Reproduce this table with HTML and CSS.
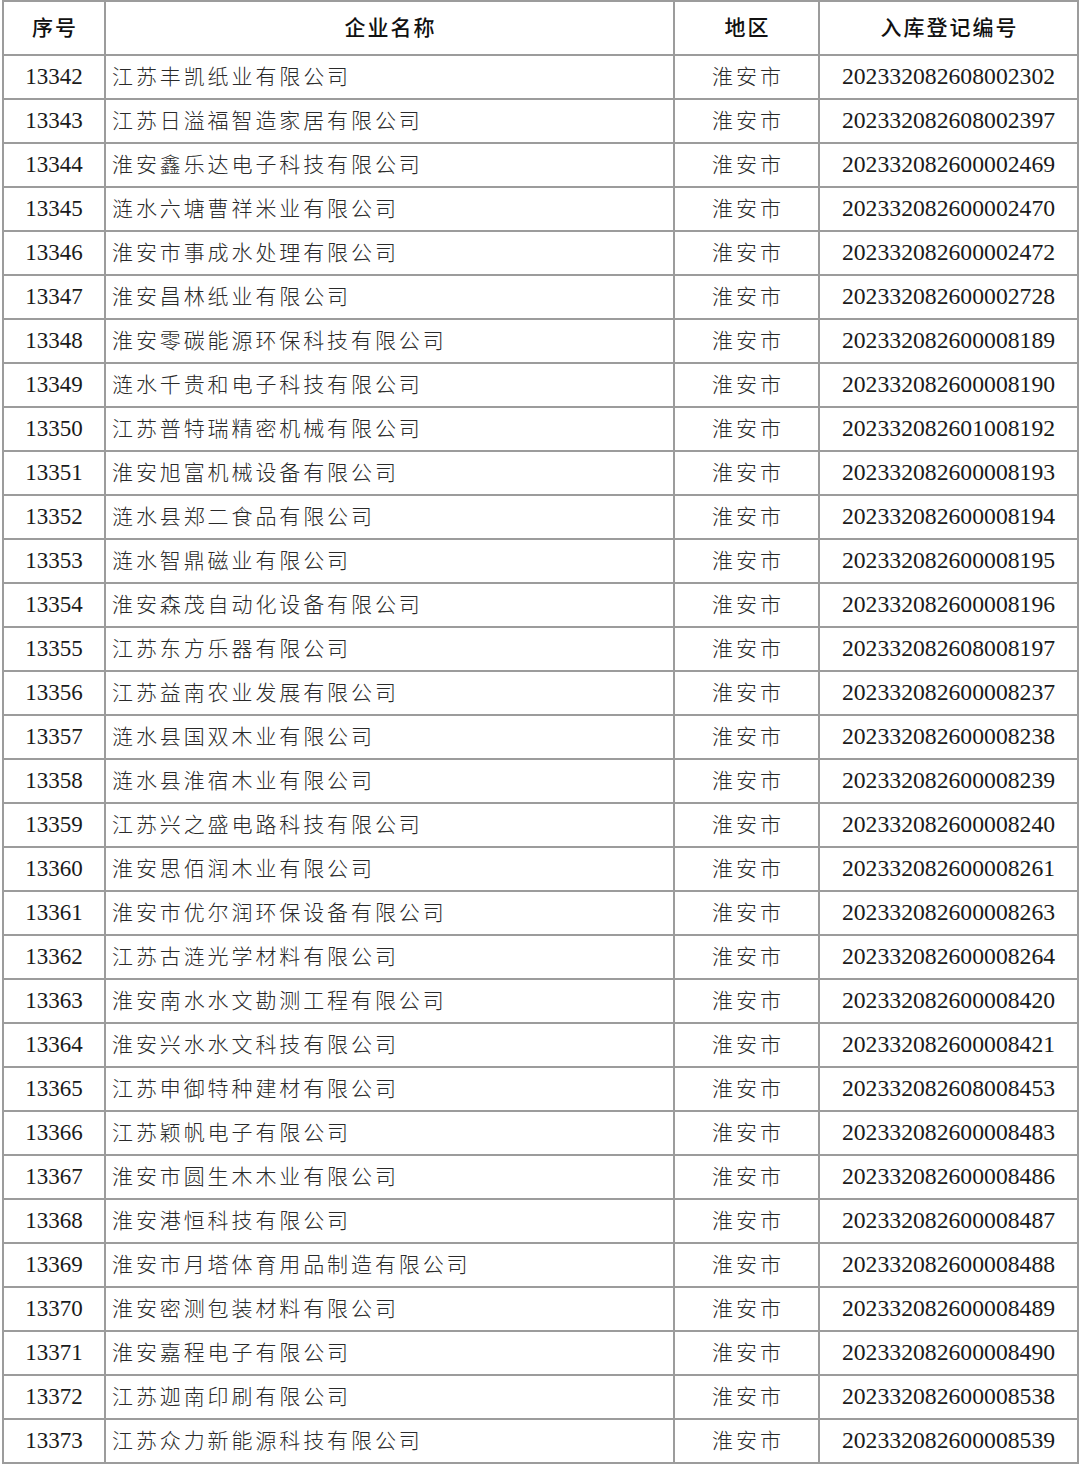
FILE: index.html
```html
<!DOCTYPE html>
<html lang="zh-CN">
<head>
<meta charset="utf-8">
<title>企业名单</title>
<link rel="stylesheet" href="styles.css">
</head>
<body>
<div class="table">
  <div class="cell head">序号</div>
  <div class="cell head">企业名称</div>
  <div class="cell head">地区</div>
  <div class="cell head">入库登记编号</div>

  <div class="cell num">13342</div><div class="cell name">江苏丰凯纸业有限公司</div><div class="cell region">淮安市</div><div class="cell code">202332082608002302</div>
  <div class="cell num">13343</div><div class="cell name">江苏日溢福智造家居有限公司</div><div class="cell region">淮安市</div><div class="cell code">202332082608002397</div>
  <div class="cell num">13344</div><div class="cell name">淮安鑫乐达电子科技有限公司</div><div class="cell region">淮安市</div><div class="cell code">202332082600002469</div>
  <div class="cell num">13345</div><div class="cell name">涟水六塘曹祥米业有限公司</div><div class="cell region">淮安市</div><div class="cell code">202332082600002470</div>
  <div class="cell num">13346</div><div class="cell name">淮安市事成水处理有限公司</div><div class="cell region">淮安市</div><div class="cell code">202332082600002472</div>
  <div class="cell num">13347</div><div class="cell name">淮安昌林纸业有限公司</div><div class="cell region">淮安市</div><div class="cell code">202332082600002728</div>
  <div class="cell num">13348</div><div class="cell name">淮安零碳能源环保科技有限公司</div><div class="cell region">淮安市</div><div class="cell code">202332082600008189</div>
  <div class="cell num">13349</div><div class="cell name">涟水千贵和电子科技有限公司</div><div class="cell region">淮安市</div><div class="cell code">202332082600008190</div>
  <div class="cell num">13350</div><div class="cell name">江苏普特瑞精密机械有限公司</div><div class="cell region">淮安市</div><div class="cell code">202332082601008192</div>
  <div class="cell num">13351</div><div class="cell name">淮安旭富机械设备有限公司</div><div class="cell region">淮安市</div><div class="cell code">202332082600008193</div>
  <div class="cell num">13352</div><div class="cell name">涟水县郑二食品有限公司</div><div class="cell region">淮安市</div><div class="cell code">202332082600008194</div>
  <div class="cell num">13353</div><div class="cell name">涟水智鼎磁业有限公司</div><div class="cell region">淮安市</div><div class="cell code">202332082600008195</div>
  <div class="cell num">13354</div><div class="cell name">淮安森茂自动化设备有限公司</div><div class="cell region">淮安市</div><div class="cell code">202332082600008196</div>
  <div class="cell num">13355</div><div class="cell name">江苏东方乐器有限公司</div><div class="cell region">淮安市</div><div class="cell code">202332082608008197</div>
  <div class="cell num">13356</div><div class="cell name">江苏益南农业发展有限公司</div><div class="cell region">淮安市</div><div class="cell code">202332082600008237</div>
  <div class="cell num">13357</div><div class="cell name">涟水县国双木业有限公司</div><div class="cell region">淮安市</div><div class="cell code">202332082600008238</div>
  <div class="cell num">13358</div><div class="cell name">涟水县淮宿木业有限公司</div><div class="cell region">淮安市</div><div class="cell code">202332082600008239</div>
  <div class="cell num">13359</div><div class="cell name">江苏兴之盛电路科技有限公司</div><div class="cell region">淮安市</div><div class="cell code">202332082600008240</div>
  <div class="cell num">13360</div><div class="cell name">淮安思佰润木业有限公司</div><div class="cell region">淮安市</div><div class="cell code">202332082600008261</div>
  <div class="cell num">13361</div><div class="cell name">淮安市优尔润环保设备有限公司</div><div class="cell region">淮安市</div><div class="cell code">202332082600008263</div>
  <div class="cell num">13362</div><div class="cell name">江苏古涟光学材料有限公司</div><div class="cell region">淮安市</div><div class="cell code">202332082600008264</div>
  <div class="cell num">13363</div><div class="cell name">淮安南水水文勘测工程有限公司</div><div class="cell region">淮安市</div><div class="cell code">202332082600008420</div>
  <div class="cell num">13364</div><div class="cell name">淮安兴水水文科技有限公司</div><div class="cell region">淮安市</div><div class="cell code">202332082600008421</div>
  <div class="cell num">13365</div><div class="cell name">江苏申御特种建材有限公司</div><div class="cell region">淮安市</div><div class="cell code">202332082608008453</div>
  <div class="cell num">13366</div><div class="cell name">江苏颖帆电子有限公司</div><div class="cell region">淮安市</div><div class="cell code">202332082600008483</div>
  <div class="cell num">13367</div><div class="cell name">淮安市圆生木木业有限公司</div><div class="cell region">淮安市</div><div class="cell code">202332082600008486</div>
  <div class="cell num">13368</div><div class="cell name">淮安港恒科技有限公司</div><div class="cell region">淮安市</div><div class="cell code">202332082600008487</div>
  <div class="cell num">13369</div><div class="cell name">淮安市月塔体育用品制造有限公司</div><div class="cell region">淮安市</div><div class="cell code">202332082600008488</div>
  <div class="cell num">13370</div><div class="cell name">淮安密测包装材料有限公司</div><div class="cell region">淮安市</div><div class="cell code">202332082600008489</div>
  <div class="cell num">13371</div><div class="cell name">淮安嘉程电子有限公司</div><div class="cell region">淮安市</div><div class="cell code">202332082600008490</div>
  <div class="cell num">13372</div><div class="cell name">江苏迦南印刷有限公司</div><div class="cell region">淮安市</div><div class="cell code">202332082600008538</div>
  <div class="cell num">13373</div><div class="cell name">江苏众力新能源科技有限公司</div><div class="cell region">淮安市</div><div class="cell code">202332082600008539</div>
</div>
</body>
</html>
```
FILE: styles.css
```css
html, body {
  margin: 0;
  padding: 0;
  background: #ffffff;
}

body {
  padding-left: 2px;
}

.table {
  display: grid;
  grid-template-columns: 100px 567px 143px 257px;
  grid-template-rows: 52px repeat(32, 42px);
  gap: 2px;
  padding: 2px;
  width: 1073px;
  background: #9c9c9c;
}

.cell {
  background: #ffffff;
  display: flex;
  align-items: center;
  color: #1e1e1e;
  white-space: nowrap;
  overflow: hidden;
}

.head {
  justify-content: center;
  font-family: "Noto Sans CJK SC", sans-serif;
  font-weight: 500;
  font-size: 21px;
  letter-spacing: 2px;
  padding-left: 2px;
  color: #111111;
  padding-bottom: 5px;
}

.num {
  justify-content: center;
  font-family: "Liberation Serif", "Times New Roman", serif;
  font-size: 23px;
  color: #1a1a1a;
  padding-bottom: 1px;
}

.name {
  justify-content: flex-start;
  padding-left: 6px;
  padding-bottom: 4px;
  font-family: "Noto Sans CJK SC", sans-serif;
  font-weight: 300;
  font-size: 21px;
  letter-spacing: 2.9px;
  color: #2a2a2a;
}

.region {
  justify-content: center;
  padding-left: 2.9px;
  padding-bottom: 4px;
  font-family: "Noto Sans CJK SC", sans-serif;
  font-weight: 300;
  font-size: 21px;
  letter-spacing: 2.9px;
  color: #2a2a2a;
}

.code {
  justify-content: center;
  font-family: "Liberation Serif", "Times New Roman", serif;
  font-size: 23.7px;
  color: #1a1a1a;
  padding-bottom: 1px;
}
```
